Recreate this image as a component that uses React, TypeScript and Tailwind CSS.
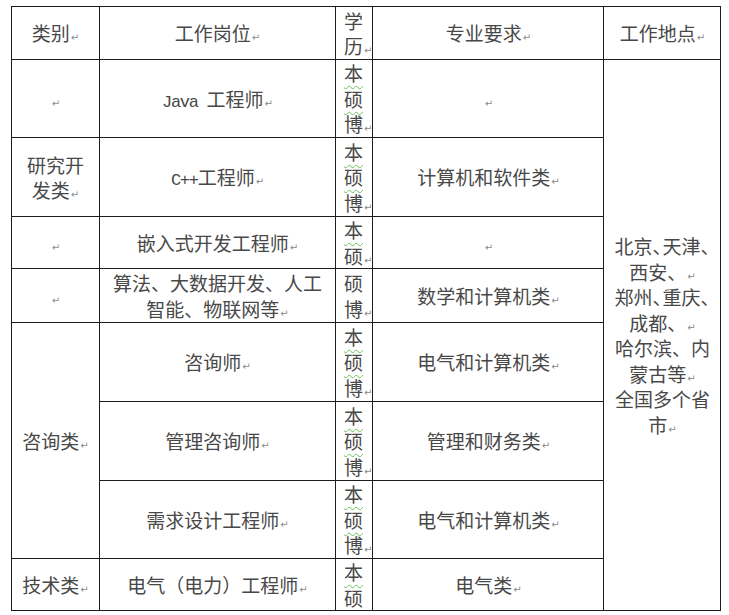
import type { ReactNode } from "react";

// paragraph mark, as Word draws it at the end of every cell
function Mark() {
  return (
    <span className="ml-[1px] inline-block font-['DejaVu_Sans',sans-serif] text-[10px] leading-none text-[#8a8a8a]">
      ↵
    </span>
  );
}

// half-width ideographic comma (Word's punctuation compression)
function Comma() {
  return <span className="-mr-[9px]">、</span>;
}

function Lines({ lines, mark = true }: { lines: ReactNode[]; mark?: boolean }) {
  return (
    <>
      {lines.map((line, i) => (
        <div key={i} className="h-[25.5px] whitespace-nowrap">
          {line}
          {mark && i === lines.length - 1 && <Mark />}
        </div>
      ))}
    </>
  );
}

function Degree({ chars, wavy = true, mark = true }: { chars: string[]; wavy?: boolean; mark?: boolean }) {
  return (
    <div className="overflow-hidden">
      {chars.map((c, i) => (
        <div key={i} className="h-[25.5px] whitespace-nowrap">
          <span
            className={
              wavy
                ? "underline decoration-wavy decoration-[#6cbf5a] decoration-[1px] underline-offset-[4px]"
                : ""
            }
          >
            {c}
          </span>
          {mark && i === chars.length - 1 && <Mark />}
        </div>
      ))}
    </div>
  );
}

const cell = "border border-[#1c1c1c] px-[7px] py-0 text-center align-middle";
const degreeCell = "border border-[#1c1c1c] pl-[8px] pr-0 py-0 text-left align-middle overflow-hidden";
const latin = "font-['Liberation_Mono',monospace] text-[17px] leading-none tracking-[-1.3px]";

export default function App() {
  return (
    <div className="h-[615px] w-[729px] overflow-hidden bg-white pl-[11px] pt-[6px] font-['Noto_Sans_CJK_SC',sans-serif] text-[19px] leading-[25.5px] text-[#484848]">
      <table className="table-fixed border-collapse">
        <colgroup>
          <col className="w-[88px]" />
          <col className="w-[236px]" />
          <col className="w-[37px]" />
          <col className="w-[231px]" />
          <col className="w-[117px]" />
        </colgroup>
        <tbody>
          <tr className="h-[53px]">
            <td className={cell}><Lines lines={["类别"]} /></td>
            <td className={cell}><Lines lines={["工作岗位"]} /></td>
            <td className={degreeCell}><Degree chars={["学", "历"]} wavy={false} /></td>
            <td className={cell}><Lines lines={["专业要求"]} /></td>
            <td className={cell}><Lines lines={["工作地点"]} /></td>
          </tr>
          <tr className="h-[78px]">
            <td className={cell}><Mark /></td>
            <td className={cell}>
              <Lines lines={[<><span className={latin}>Java </span>工程师</>]} />
            </td>
            <td className={degreeCell}><Degree chars={["本", "硕", "博"]} /></td>
            <td className={cell}><Mark /></td>
            <td rowSpan={8} className={cell}>
              <Lines
                lines={[
                  <>北京<Comma />天津<Comma /></>,
                  <>西安、<Mark /></>,
                  <>郑州<Comma />重庆<Comma /></>,
                  <>成都、<Mark /></>,
                  "哈尔滨、内",
                  <>蒙古等<Mark /></>,
                  "全国多个省",
                  "市",
                ]}
              />
            </td>
          </tr>
          <tr className="h-[79px]">
            <td className={cell}><Lines lines={["研究开", "发类"]} /></td>
            <td className={cell}>
              <Lines lines={[<><span className={latin}>C++</span>工程师</>]} />
            </td>
            <td className={degreeCell}><Degree chars={["本", "硕", "博"]} /></td>
            <td className={cell}><Lines lines={["计算机和软件类"]} /></td>
          </tr>
          <tr className="h-[52px]">
            <td className={cell}><Mark /></td>
            <td className={cell}><Lines lines={["嵌入式开发工程师"]} /></td>
            <td className={degreeCell}><Degree chars={["本", "硕"]} /></td>
            <td className={cell}><Mark /></td>
          </tr>
          <tr className="h-[54px]">
            <td className={cell}><Mark /></td>
            <td className={cell}><Lines lines={["算法、大数据开发、人工", "智能、物联网等"]} /></td>
            <td className={degreeCell}><Degree chars={["硕", "博"]} wavy={false} /></td>
            <td className={cell}><Lines lines={["数学和计算机类"]} /></td>
          </tr>
          <tr className="h-[79px]">
            <td rowSpan={3} className={cell}><Lines lines={["咨询类"]} /></td>
            <td className={cell}><Lines lines={["咨询师"]} /></td>
            <td className={degreeCell}><Degree chars={["本", "硕", "博"]} /></td>
            <td className={cell}><Lines lines={["电气和计算机类"]} /></td>
          </tr>
          <tr className="h-[79px]">
            <td className={cell}><Lines lines={["管理咨询师"]} /></td>
            <td className={degreeCell}><Degree chars={["本", "硕", "博"]} /></td>
            <td className={cell}><Lines lines={["管理和财务类"]} /></td>
          </tr>
          <tr className="h-[78px]">
            <td className={cell}><Lines lines={["需求设计工程师"]} /></td>
            <td className={degreeCell}><Degree chars={["本", "硕", "博"]} /></td>
            <td className={cell}><Lines lines={["电气和计算机类"]} /></td>
          </tr>
          <tr className="h-[52px]">
            <td className={cell}><Lines lines={["技术类"]} /></td>
            <td className={cell}><Lines lines={["电气（电力）工程师"]} /></td>
            <td className={degreeCell}>
              <Degree chars={["本", "硕"]} mark={false} />
            </td>
            <td className={cell}><Lines lines={["电气类"]} /></td>
          </tr>
        </tbody>
      </table>
    </div>
  );
}
